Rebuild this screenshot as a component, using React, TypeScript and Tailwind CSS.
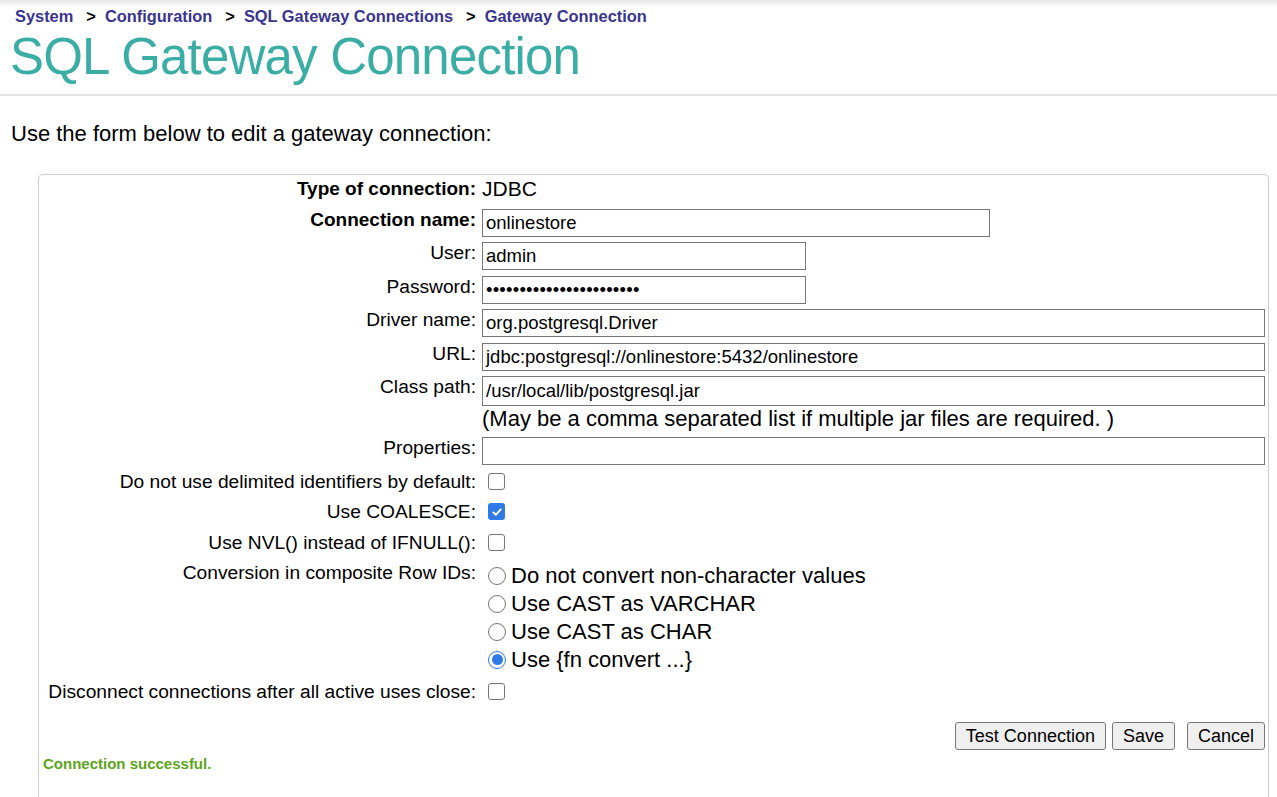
import React from "react";

const font = { fontFamily: '"Liberation Sans", Arial, sans-serif' };

function Checkbox({ checked = false }: { checked?: boolean }) {
  if (checked) {
    return (
      <span className="inline-flex h-[17px] w-[17px] items-center justify-center rounded-[3px] bg-[#2f7ae5]">
        <svg viewBox="0 0 12 12" className="h-[12px] w-[12px]">
          <path d="M2.3 6.4 L4.8 8.8 L9.8 3.4" fill="none" stroke="#fff" strokeWidth="1.9" strokeLinecap="round" strokeLinejoin="round" />
        </svg>
      </span>
    );
  }
  return <span className="inline-block h-[17px] w-[17px] rounded-[3px] border border-[#767676] bg-white" />;
}

function Radio({ checked = false }: { checked?: boolean }) {
  if (checked) {
    return (
      <span className="inline-flex h-[18px] w-[18px] shrink-0 items-center justify-center rounded-full border-[1.5px] border-[#2f7ae5] bg-white">
        <span className="h-[11px] w-[11px] rounded-full bg-[#2f7ae5]" />
      </span>
    );
  }
  return <span className="inline-block h-[18px] w-[18px] shrink-0 rounded-full border border-[#767676] bg-white" />;
}

function TextInput({ value, width }: { value: string; width?: string }) {
  return (
    <div className={`flex h-[28px] items-center border border-[#767676] bg-white px-[3px] text-[18.5px] text-black ${width ?? "flex-1"}`}>
      {value}
    </div>
  );
}

function Row({ label, bold, children, className = "", center }: { label: string; bold?: boolean; children: React.ReactNode; className?: string; center?: boolean }) {
  return (
    <div className={`flex ${center ? "items-center" : "items-start"} ${className}`}>
      <div className={`w-[438px] shrink-0 pr-[1px] text-right leading-[22px] text-black ${bold ? "text-[19px] font-bold" : "text-[19.2px]"}`}>
        {label}
      </div>
      <div className="flex min-w-0 flex-1 items-center pl-[5px]">{children}</div>
    </div>
  );
}

const radios = [
  { label: "Do not convert non-character values", checked: false },
  { label: "Use CAST as VARCHAR", checked: false },
  { label: "Use CAST as CHAR", checked: false },
  { label: "Use {fn convert ...}", checked: true },
];

export default function App() {
  return (
    <div className="min-h-[797px] bg-white" style={font}>
      {/* Header */}
      <div className="bg-[linear-gradient(#e6e6e6,#ffffff_8px)] pt-[7px]">
        <div className="flex items-center pl-[15px] text-[16.4px] font-bold leading-[18px]">
          <span className="text-[#38348f]">System</span>
          <span className="ml-[13px] mr-[9px] text-black">&gt;</span>
          <span className="text-[#38348f]">Configuration</span>
          <span className="ml-[13px] mr-[9px] text-black">&gt;</span>
          <span className="text-[#38348f]">SQL Gateway Connections</span>
          <span className="ml-[13px] mr-[9px] text-black">&gt;</span>
          <span className="text-[#38348f]">Gateway Connection</span>
        </div>
        <h1 className="mt-[6px] pl-[10px] text-[51px] leading-[51px] tracking-[-0.8px] text-[#3aaea5]">SQL Gateway Connection</h1>
        <div className="mt-[12px] h-[2px] bg-[#e3e3e3]" />
      </div>

      <p className="mt-[25px] pl-[11px] text-[22px] leading-[26px] text-black">Use the form below to edit a gateway connection:</p>

      {/* Form panel */}
      <div className="ml-[38px] mr-[8px] mt-[27px] min-h-[640px] rounded-t-[5px] border border-b-0 border-[#cccccc] pr-[3px] pt-[3px]">
        <Row label="Type of connection:" bold>
          <span className="text-[21px] leading-[22px] text-black">JDBC</span>
        </Row>

        <Row label="Connection name:" bold className="mt-[9px]">
          <TextInput value="onlinestore" width="w-[508px]" />
        </Row>
        <Row label="User:" className="mt-[5px]">
          <TextInput value="admin" width="w-[324px]" />
        </Row>
        <Row label="Password:" className="mt-[6px]">
          <div className="flex h-[28px] w-[324px] items-center border border-[#767676] bg-white px-[3px] text-[18.5px] tracking-[0.2px] text-black">
            {"•".repeat(23)}
          </div>
        </Row>
        <Row label="Driver name:" className="mt-[5px]">
          <TextInput value="org.postgresql.Driver" />
        </Row>
        <Row label="URL:" className="mt-[6px]">
          <TextInput value="jdbc:postgresql://onlinestore:5432/onlinestore" />
        </Row>
        <Row label="Class path:" className="mt-[5px]">
          <div className="flex flex-1 flex-col">
            <TextInput value="/usr/local/lib/postgresql.jar" />
            <span className="text-[22px] leading-[25px] text-black">
              (May be a comma separated list if multiple jar files are required. )
            </span>
          </div>
        </Row>
        <Row label="Properties:" className="mt-[6px]">
          <TextInput value="" />
        </Row>

        <Row label="Do not use delimited identifiers by default:" center className="mt-[6px] h-[22px]">
          <span className="ml-[6px] flex"><Checkbox /></span>
        </Row>
        <Row label="Use COALESCE:" center className="mt-[8px] h-[22px]">
          <span className="ml-[6px] flex"><Checkbox checked /></span>
        </Row>
        <Row label="Use NVL() instead of IFNULL():" center className="mt-[9px] h-[22px]">
          <span className="ml-[6px] flex"><Checkbox /></span>
        </Row>

        <Row label="Conversion in composite Row IDs:" className="mt-[8px]">
          <div className="flex flex-col">
            {radios.map((r) => (
              <div key={r.label} className="ml-[6px] flex h-[28px] items-center gap-[5px] text-[22px] text-black">
                <Radio checked={r.checked} />
                <span>{r.label}</span>
              </div>
            ))}
          </div>
        </Row>

        <Row label="Disconnect connections after all active uses close:" center className="mt-[7px] h-[22px]">
          <span className="ml-[6px] flex"><Checkbox /></span>
        </Row>

        <div className="mt-[19px] flex justify-end gap-[6px]">
          <button className="h-[28px] rounded-[3px] border border-[#767676] bg-[#efefef] px-[10px] text-[18px] text-black">Test Connection</button>
          <button className="h-[28px] rounded-[3px] border border-[#767676] bg-[#efefef] px-[10px] text-[18px] text-black">Save</button>
          <button className="ml-[6px] h-[28px] rounded-[3px] border border-[#767676] bg-[#efefef] px-[10px] text-[18px] text-black">Cancel</button>
        </div>

        <p className="mt-[5px] pl-[4px] text-[15px] font-bold leading-[18px] text-[#5ba51c]">Connection successful.</p>
      </div>
    </div>
  );
}
